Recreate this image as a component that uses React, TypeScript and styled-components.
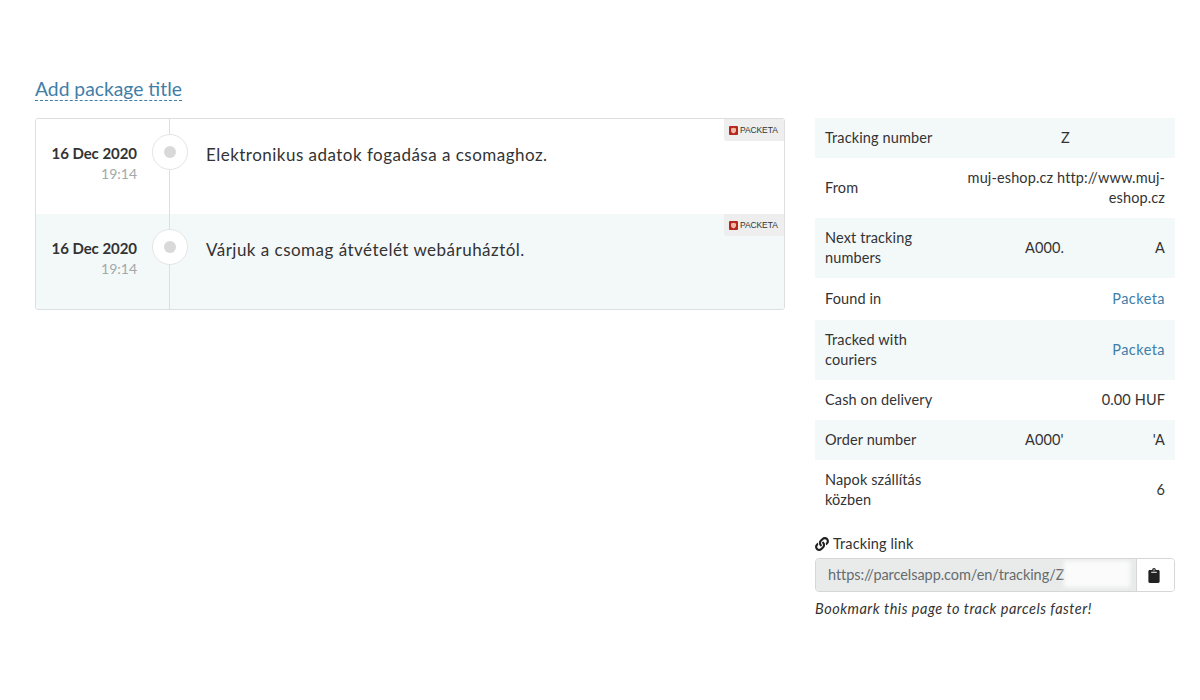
import React from "react";
import styled, { createGlobalStyle } from "styled-components";

const Global = createGlobalStyle`
  html, body { margin: 0; padding: 0; background: #fff; }
  body { font-family: "Lato", "Open Sans", sans-serif; color: #333; }
`;

const Page = styled.div`
  width: 1200px;
  height: 700px;
  box-sizing: border-box;
  padding: 77px 25px 0 35px;
  overflow: hidden;
`;
const TitleLink = styled.a`
  display: inline-block;
  font-size: 19.3px;
  line-height: 23px;
  color: #3f7ea6;
  border-bottom: 1px dashed #3f7ea6;
`;
const Columns = styled.div`
  display: flex;
  gap: 30px;
  margin-top: 17px;
  align-items: flex-start;
`;
const Card = styled.div`
  width: 750px;
  box-sizing: border-box;
  border: 1px solid #dcdfe0;
  border-radius: 3px;
  overflow: hidden;
`;
const EventRow = styled.div<{ $shaded?: boolean }>`
  position: relative;
  height: 95px;
  display: grid;
  grid-template-columns: 133px 1fr;
  background: ${(p) => (p.$shaded ? "#f3f8f9" : "#fff")};
`;
const DateCol = styled.div`
  padding: 24px 32px 0 0;
  text-align: right;
`;
const DateText = styled.div`
  font-size: 15px;
  line-height: 20px;
  font-weight: 700;
  letter-spacing: -0.05px;
  color: #333;
`;
const TimeText = styled.div`
  margin-top: 1px;
  font-size: 14px;
  line-height: 20px;
  color: #a3a9a9;
`;
const Rail = styled.div`
  position: relative;
  border-left: 1px solid #dcdfe0;
`;
const Node = styled.div`
  position: absolute;
  left: -18px;
  top: 15px;
  width: 36px;
  height: 36px;
  box-sizing: border-box;
  border: 1px solid #e2e4e5;
  border-radius: 50%;
  background: #fff;
  display: flex;
  align-items: center;
  justify-content: center;
`;
const Dot = styled.span`
  width: 12px;
  height: 12px;
  border-radius: 50%;
  background: #d9d9d9;
`;
const Message = styled.div`
  padding: 26px 0 0 36px;
  font-size: 17px;
  line-height: 20px;
  letter-spacing: 0.48px;
  color: #333;
`;
const Tag = styled.div`
  position: absolute;
  top: 0;
  right: 0;
  width: 60px;
  height: 22px;
  box-sizing: border-box;
  display: flex;
  align-items: center;
  padding-left: 5px;
  gap: 2px;
  background: #eeeeee;
  border-bottom-left-radius: 3px;
  font-family: "Liberation Sans", sans-serif;
  font-size: 8.5px;
  letter-spacing: -0.1px;
  color: #333;
`;
const Side = styled.div`
  width: 360px;
`;
const InfoRow = styled.div<{ $shaded?: boolean; $h: number }>`
  display: grid;
  grid-template-columns: 126px 1fr;
  align-items: center;
  height: ${(p) => p.$h}px;
  box-sizing: border-box;
  padding: 0 10px;
  font-size: 14.5px;
  line-height: 20px;
  letter-spacing: 0.12px;
  color: #333;
  background: ${(p) => (p.$shaded ? "#f3f8f9" : "#fff")};
`;
const Label = styled.div`
  padding-right: 14px;
`;
const Value = styled.div`
  text-align: right;
`;
const SplitValue = styled.div<{ $left: number }>`
  display: flex;
  justify-content: space-between;
  padding-left: ${(p) => p.$left}px;
`;
const PlainLink = styled.a`
  color: #3f7ea6;
  letter-spacing: 0.45px;
`;
const LinkLabel = styled.div`
  display: flex;
  align-items: center;
  gap: 4px;
  margin-top: 14px;
  font-size: 14.5px;
  line-height: 20px;
  letter-spacing: 0.12px;
`;
const InputGroup = styled.div`
  display: flex;
  height: 34px;
  margin-top: 4px;
  box-sizing: border-box;
  border: 1px solid #d4d6d8;
  border-radius: 4px;
  overflow: hidden;
`;
const UrlField = styled.div`
  position: relative;
  flex: 1;
  background: #e9ebeb;
  border-right: 1px solid #d4d6d8;
  padding: 0 12px;
  font-size: 14.5px;
  line-height: 32px;
  letter-spacing: -0.06px;
  color: #666b6e;
  white-space: nowrap;
`;
const Redaction = styled.span`
  position: absolute;
  left: 248px;
  top: 2px;
  width: 66px;
  height: 26px;
  background: #fbfbfb;
  filter: blur(2px);
`;
const CopyButton = styled.div`
  width: 37px;
  box-sizing: border-box;
  padding-right: 3px;
  display: flex;
  align-items: center;
  justify-content: center;
  background: #fff;
`;
const Hint = styled.div`
  margin-top: 7px;
  font-size: 14.5px;
  line-height: 20px;
  letter-spacing: 0.5px;
  font-style: italic;
  color: #333;
`;

const PacketaTag = () => (
  <Tag>
    <svg width="9" height="9" viewBox="0 0 9 9">
      <rect width="9" height="9" rx="1" fill="#b5281e" />
      <path d="M2 2.5 4.5 1.8 7 2.5v2.3C7 6.2 5.6 7 4.5 7.5 3.4 7 2 6.2 2 4.8z" fill="#f2b8a8" />
    </svg>
    PACKETA
  </Tag>
);

const LinkIcon = () => (
  <svg width="14" height="14" viewBox="0 0 512 512" fill="#222">
    <path d="M326.6 185.4c59.7 59.8 58.9 155.7.4 214.6l-67.2 67.2c-59.3 59.3-155.7 59.3-215 0-59.3-59.3-59.3-155.7 0-215l37.1-37.1c9.8-9.8 26.8-3.3 27.3 10.6.6 17.7 3.8 35.5 9.7 52.7 2 5.8.6 12.3-3.8 16.6l-13.1 13.1c-28 28-28.9 73.7-1.2 102 28 28.5 74 28.7 102.2.5l67.2-67.2c28.2-28.2 28.1-73.8 0-101.8-3.7-3.7-7.4-6.6-10.3-8.6a16 16 0 0 1-6.9-12.6c-.4-10.6 3.3-21.5 11.7-29.8l21.1-21.1c5.5-5.5 14.2-6.2 20.6-1.7 7.3 5.1 14.2 10.9 20.2 17.6zM467.5 44.4c-59.3-59.3-155.7-59.3-215 0l-67.2 67.2-.4.4c-58.6 58.9-59.4 154.8.4 214.6 6 6.7 12.9 12.5 20.2 17.6 6.4 4.5 15.1 3.8 20.6-1.7l21.1-21.1c8.4-8.4 12.1-19.2 11.7-29.8a16 16 0 0 0-6.9-12.6c-2.9-2-6.6-4.9-10.3-8.6-28.1-28-28.2-73.6 0-101.8l67.2-67.2c28.2-28.2 74.2-28 102.2.5 27.7 28.3 26.8 74-1.2 102l-13.1 13.1c-4.4 4.3-5.8 10.8-3.8 16.6 5.9 17.2 9.1 35 9.7 52.7.5 13.9 17.5 20.4 27.3 10.6l37.1-37.1c59.3-59.3 59.3-155.7 0-215z" />
  </svg>
);

const ClipboardIcon = () => (
  <svg width="12" height="15" viewBox="0 0 384 512" fill="#222">
    <path d="M384 112v352c0 26.5-21.5 48-48 48H48c-26.5 0-48-21.5-48-48V112c0-26.5 21.5-48 48-48h80c0-35.3 28.7-64 64-64s64 28.7 64 64h80c26.5 0 48 21.5 48 48zM192 40a24 24 0 1 0 0 48 24 24 0 0 0 0-48zm96 114v-20a6 6 0 0 0-6-6H102a6 6 0 0 0-6 6v20a6 6 0 0 0 6 6h180a6 6 0 0 0 6-6z" />
  </svg>
);

const events = [
  { text: "Elektronikus adatok fogadása a csomaghoz.", shaded: false },
  { text: "Várjuk a csomag átvételét webáruháztól.", shaded: true },
];

export default function App() {
  return (
    <Page>
      <Global />
      <TitleLink>Add package title</TitleLink>
      <Columns>
        <Card>
          {events.map((e) => (
            <EventRow key={e.text} $shaded={e.shaded}>
              <DateCol>
                <DateText>16 Dec 2020</DateText>
                <TimeText>19:14</TimeText>
              </DateCol>
              <Rail>
                <Node>
                  <Dot />
                </Node>
                <Message>{e.text}</Message>
              </Rail>
              <PacketaTag />
            </EventRow>
          ))}
        </Card>
        <Side>
          <InfoRow $shaded $h={40}>
            <Label>Tracking number</Label>
            <SplitValue $left={110}>
              <span>Z</span>
            </SplitValue>
          </InfoRow>
          <InfoRow $h={60}>
            <Label>From</Label>
            <Value>muj-eshop.cz http://www.muj-eshop.cz</Value>
          </InfoRow>
          <InfoRow $shaded $h={60}>
            <Label>Next tracking numbers</Label>
            <SplitValue $left={74}>
              <span>A000.</span>
              <span>A</span>
            </SplitValue>
          </InfoRow>
          <InfoRow $h={42}>
            <Label>Found in</Label>
            <Value>
              <PlainLink>Packeta</PlainLink>
            </Value>
          </InfoRow>
          <InfoRow $shaded $h={60}>
            <Label>Tracked with couriers</Label>
            <Value>
              <PlainLink>Packeta</PlainLink>
            </Value>
          </InfoRow>
          <InfoRow $h={40}>
            <Label>Cash on delivery</Label>
            <Value>0.00 HUF</Value>
          </InfoRow>
          <InfoRow $shaded $h={40}>
            <Label>Order number</Label>
            <SplitValue $left={74}>
              <span>A000'</span>
              <span>'A</span>
            </SplitValue>
          </InfoRow>
          <InfoRow $h={60}>
            <Label>Napok szállítás közben</Label>
            <Value>6</Value>
          </InfoRow>
          <LinkLabel>
            <LinkIcon />
            Tracking link
          </LinkLabel>
          <InputGroup>
            <UrlField>
              https://parcelsapp.com/en/tracking/Z
              <Redaction />
            </UrlField>
            <CopyButton>
              <ClipboardIcon />
            </CopyButton>
          </InputGroup>
          <Hint>Bookmark this page to track parcels faster!</Hint>
        </Side>
      </Columns>
    </Page>
  );
}
